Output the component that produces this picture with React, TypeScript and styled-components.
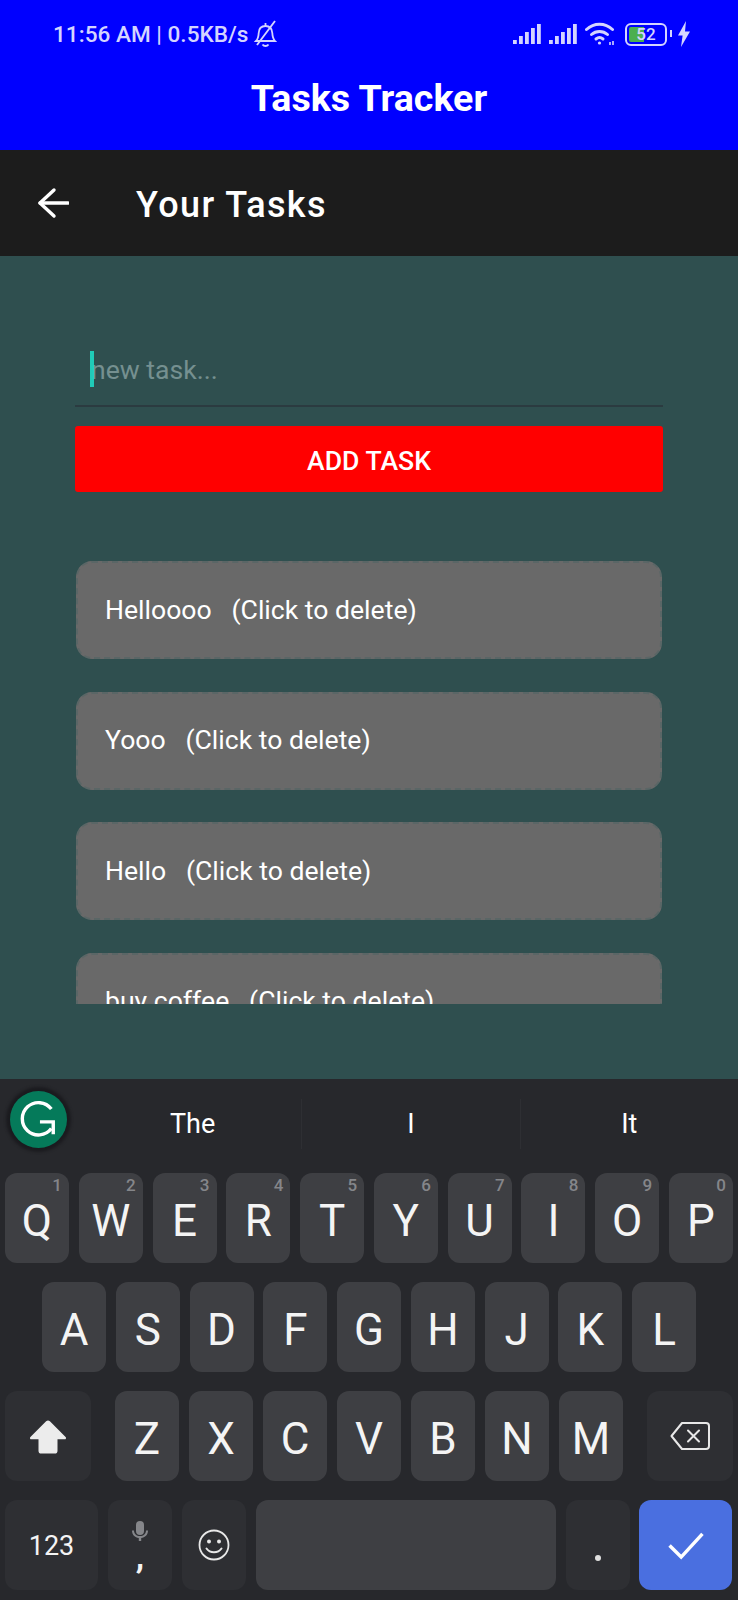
import React from 'react';
import styled, { createGlobalStyle } from 'styled-components';

const GlobalStyle = createGlobalStyle`
    html, body {
        margin: 0;
        padding: 0;
        background: #27282c;
    }
    * {
        box-sizing: border-box;
    }
`;

const Page = styled.div`
    display: flex;
    flex-direction: column;
    width: 738px;
    height: 1600px;
    overflow: hidden;
    font-family: Roboto, 'Liberation Sans', sans-serif;
    color: #fff;
`;

const AppBar = styled.div`
    display: flex;
    flex-direction: column;
    height: 150px;
    background: #0000ff;
`;

const StatusBar = styled.div`
    display: flex;
    align-items: center;
    justify-content: space-between;
    height: 30px;
    margin-top: 19px;
    padding: 0 48px 0 53px;
    color: #d4d4ff;
`;

const StatusText = styled.div`
    display: flex;
    align-items: center;
    gap: 5px;
    font-size: 22.6px;
    font-weight: 500;
`;

const StatusIcons = styled.div`
    display: flex;
    align-items: center;
    gap: 8px;
`;

const Battery = styled.div`
    position: relative;
    display: flex;
    align-items: center;
    justify-content: center;
    width: 42px;
    height: 23px;
    margin-left: 2px;
    margin-right: 3px;
    border: 2.5px solid #d4d4ff;
    border-radius: 6px;
    font-size: 17px;
    font-weight: 500;
    line-height: 1;
    background: linear-gradient(to right, #4caf50 0, #4caf50 46%, transparent 46%);
    background-clip: content-box;
    padding: 2px;

    &::after {
        content: '';
        position: absolute;
        right: -7px;
        top: 5px;
        width: 2px;
        height: 7px;
        background: #d4d4ff;
    }
`;

const AppTitle = styled.div`
    margin-top: 24px;
    text-align: center;
    font-size: 37.6px;
    font-weight: 700;
    line-height: 50px;
`;

const Header = styled.div`
    display: flex;
    align-items: center;
    height: 106px;
    padding-left: 37px;
    background: #1c1c1c;
`;

const HeaderTitle = styled.div`
    margin-left: 67px;
    padding-top: 4px;
    font-size: 36px;
    font-weight: 500;
    letter-spacing: 1.4px;
`;

const Body = styled.div`
    display: flex;
    flex: 1;
    flex-direction: column;
    padding: 84px 75px 0;
    background: #2f4f4f;
`;

const InputWrap = styled.div`
    position: relative;
    height: 67px;
    border-bottom: 2px solid #2b3b40;
`;

const TaskInput = styled.input`
    width: 100%;
    height: 58px;
    padding: 0 0 0 16px;
    border: 0;
    outline: 0;
    background: transparent;
    color: #fff;
    font-family: inherit;
    font-size: 26.6px;

    &::placeholder {
        color: #759090;
        opacity: 1;
    }
`;

const Caret = styled.span`
    position: absolute;
    left: 15px;
    top: 11px;
    width: 4px;
    height: 36px;
    background: #1fd8c3;
    opacity: 0.9;
`;

const AddButton = styled.button`
    width: 100%;
    height: 66px;
    margin-top: 19px;
    padding-top: 4px;
    border: 0;
    border-radius: 3px;
    background: #ff0000;
    color: #fff;
    font-family: inherit;
    font-size: 26.6px;
    font-weight: 500;
`;

const TaskList = styled.div`
    display: flex;
    flex-direction: column;
    gap: 32.6px;
    height: 443px;
    margin: 69px 1px 0;
    overflow: hidden;
`;

const TaskItem = styled.div`
    display: flex;
    flex: none;
    align-items: center;
    height: 98px;
    padding: 0 0 2px 27px;
    border: 2px dashed #5a6666;
    border-radius: 16px;
    background: #696969;
    font-size: 26.6px;
    white-space: pre;
`;

const Keyboard = styled.div`
    display: flex;
    flex: none;
    flex-direction: column;
    height: 521px;
    background: #27282c;
`;

const Suggestions = styled.div`
    display: flex;
    align-items: center;
    height: 94px;
`;

const GrammarlySlot = styled.div`
    display: flex;
    flex: none;
    justify-content: flex-start;
    width: 84px;
    padding: 0 0 14px 10px;
`;

const GrammarlyBadge = styled.div`
    display: flex;
    align-items: center;
    justify-content: center;
    width: 57px;
    height: 57px;
    border-radius: 50%;
    background: #057a5a;
    box-shadow: 0 0 3px 4px #1b1b1f;
`;

const Suggestion = styled.div<{ $divided?: boolean }>`
    display: flex;
    flex: 1;
    align-items: center;
    justify-content: center;
    height: 50px;
    margin-bottom: 4px;
    font-size: 27px;
    border-left: ${p => (p.$divided ? '1px solid #2e2f33' : '0')};
`;

const Rows = styled.div`
    display: flex;
    flex-direction: column;
    gap: 19px;
`;

const KeyRow = styled.div<{ $inset?: number; $gap?: number }>`
    display: flex;
    gap: ${p => p.$gap ?? 9.78}px;
    height: 90px;
    padding: 0 ${p => p.$inset ?? 5}px;
`;

const Key = styled.div<{ $width?: number; $fn?: boolean; $accent?: boolean; $push?: number }>`
    position: relative;
    display: flex;
    flex: none;
    flex-direction: column;
    align-items: center;
    justify-content: center;
    width: ${p => p.$width ?? 64}px;
    margin-left: ${p => p.$push ?? 0}px;
    border-radius: 12px;
    background: ${p => (p.$accent ? '#4a6fe0' : p.$fn ? '#2e2f33' : '#3e3f43')};
    font-size: 44px;
    color: #f4f4f4;
`;

const KeyLetter = styled.span`
    padding-top: 5px;
`;

const KeyHint = styled.span`
    position: absolute;
    top: 4px;
    right: 7px;
    font-size: 17px;
    font-weight: 500;
    line-height: 1;
    color: #85868a;
`;

const SmallLabel = styled.span`
    padding-top: 2px;
    font-size: 27px;
`;

const Comma = styled.span`
    height: 22px;
    margin-top: 5px;
    font-size: 34px;
    font-weight: 700;
    line-height: 16px;
`;

const Dot = styled.span`
    width: 6px;
    height: 6px;
    margin-top: 26px;
    border-radius: 50%;
    background: #e0e0e0;
`;

const Signal = () => (
    <svg width="28" height="20" viewBox="0 0 28 20" fill="#d4d4ff">
        <rect x="0" y="16" width="3.8" height="4" />
        <rect x="6" y="12" width="3.8" height="8" />
        <rect x="12" y="8" width="3.8" height="12" />
        <rect x="18" y="4" width="3.8" height="16" />
        <rect x="24" y="0" width="3.8" height="20" />
    </svg>
);

const Wifi = () => (
    <svg width="30" height="24" viewBox="0 0 30 24" fill="none" stroke="#d4d4ff" strokeWidth="3" strokeLinecap="round">
        <path d="M1.5 7.5C9 .5 20 .5 27.5 7.5" />
        <path d="M6.5 12.5C11 8.5 18 8.5 22.5 12.5" />
        <path d="M11 17c2.2-1.8 4.8-1.8 7 0" />
        <circle cx="14.5" cy="21" r="1.6" fill="#d4d4ff" stroke="none" />
        <path d="M25 20v3M28 19v4" strokeWidth="1.6" strokeLinecap="butt" />
    </svg>
);

const Bolt = () => (
    <svg width="12" height="26" viewBox="0 0 12 26" fill="#d4d4ff">
        <path d="M8 0 0 14.5h4.6L3 26l9-15.5H7z" />
    </svg>
);

const MutedBell = () => (
    <svg width="24" height="28" viewBox="0 0 24 28" fill="none" stroke="#d4d4ff" strokeWidth="1.8">
        <path d="M3 21c2-2 2.5-4 2.7-8 .2-4.500 3-7 6.800-7s6.500 2.500 6.800 7c.2 4 .8 6 2.700 8z" />
        <path d="M12.500 6V3" />
        <path d="M9.500 24.500c1.500 2 4.500 2 6 0" />
        <path d="M22 1 4 25" />
    </svg>
);

const BackArrow = () => (
    <svg width="32" height="32" viewBox="0 0 32 32" fill="none" stroke="#fff" strokeWidth="3.4" strokeLinecap="round" strokeLinejoin="round">
        <path d="M31 16H3" />
        <path d="M17 3 3 16l14 13" />
    </svg>
);

const GrammarlyG = () => (
    <svg width="38" height="38" viewBox="0 0 40 40" fill="none" stroke="#fff" strokeWidth="3.6">
        <path d="M33 9.500A17 17 0 1 0 33 30" />
        <path d="M21 23h14v13" strokeWidth="3.600" />
    </svg>
);

const ShiftIcon = () => (
    <svg width="38" height="35" viewBox="0 0 40 36" fill="#ececec">
        <path d="M18 2a3 3 0 0 1 4 0l16.500 16.500c1 1.200.4 2.500-1 2.500H30v12a3 3 0 0 1-3 3H13a3 3 0 0 1-3-3V21H2.500c-1.400 0-2-1.300-1-2.500z" />
    </svg>
);

const BackspaceIcon = () => (
    <svg width="40" height="30" viewBox="0 0 40 30" fill="none" stroke="#e8e8e8" strokeWidth="2" strokeLinejoin="round">
        <path d="M12 2h24a3 3 0 0 1 3 3v20a3 3 0 0 1-3 3H12L1.500 15z" />
        <path d="M18 9.500 29 20.500M29 9.500 18 20.500" strokeLinecap="round" />
    </svg>
);

const MicIcon = () => (
    <svg width="18" height="22" viewBox="0 0 18 22" fill="#85868a">
        <rect x="5" y="0" width="8" height="14" rx="4" />
        <path d="M1 9.500h2c0 3.500 2.500 5.500 6 5.500s6-2 6-5.500h2c0 4.500-3 7-6.800 7.400V20H7.800v-3.100C4 16.500 1 14 1 9.500z" />
    </svg>
);

const SmileIcon = () => (
    <svg width="32" height="32" viewBox="0 0 32 32" fill="none" stroke="#e8e8e8" strokeWidth="1.800">
        <circle cx="16" cy="16" r="14.500" />
        <circle cx="11" cy="12.500" r="2" fill="#e8e8e8" stroke="none" />
        <circle cx="21" cy="12.500" r="2" fill="#e8e8e8" stroke="none" />
        <path d="M8.500 19.500c3.500 5 11.500 5 15 0" strokeLinecap="round" strokeWidth="2" />
    </svg>
);

const CheckIcon = () => (
    <svg width="38" height="29" viewBox="0 0 38 30" fill="none" stroke="#fff" strokeWidth="3.6">
        <path d="M2 15l12 12L36 3" />
    </svg>
);

const TASKS = ['Helloooo', 'Yooo', 'Hello', 'buy coffee'];
const TOP_ROW = ['Q', 'W', 'E', 'R', 'T', 'Y', 'U', 'I', 'O', 'P'];
const MIDDLE_ROW = ['A', 'S', 'D', 'F', 'G', 'H', 'J', 'K', 'L'];
const BOTTOM_ROW = ['Z', 'X', 'C', 'V', 'B', 'N', 'M'];

const App = () => (
    <Page>
        <GlobalStyle />
        <AppBar>
            <StatusBar>
                <StatusText>
                    11:56 AM | 0.5KB/s
                    <MutedBell />
                </StatusText>
                <StatusIcons>
                    <Signal />
                    <Signal />
                    <Wifi />
                    <Battery>52</Battery>
                    <Bolt />
                </StatusIcons>
            </StatusBar>
            <AppTitle>Tasks Tracker</AppTitle>
        </AppBar>
        <Header>
            <BackArrow />
            <HeaderTitle>Your Tasks</HeaderTitle>
        </Header>
        <Body>
            <InputWrap>
                <TaskInput placeholder="new task..." />
                <Caret />
            </InputWrap>
            <AddButton>ADD TASK</AddButton>
            <TaskList>
                {TASKS.map(task => (
                    <TaskItem key={task}>{`${task}   (Click to delete)`}</TaskItem>
                ))}
            </TaskList>
        </Body>
        <Keyboard>
            <Suggestions>
                <GrammarlySlot>
                    <GrammarlyBadge>
                        <GrammarlyG />
                    </GrammarlyBadge>
                </GrammarlySlot>
                <Suggestion>The</Suggestion>
                <Suggestion $divided>I</Suggestion>
                <Suggestion $divided>It</Suggestion>
            </Suggestions>
            <Rows>
                <KeyRow>
                    {TOP_ROW.map((letter, i) => (
                        <Key key={letter}>
                            <KeyHint>{(i + 1) % 10}</KeyHint>
                            <KeyLetter>{letter}</KeyLetter>
                        </Key>
                    ))}
                </KeyRow>
                <KeyRow $inset={42}>
                    {MIDDLE_ROW.map(letter => (
                        <Key key={letter}>
                            <KeyLetter>{letter}</KeyLetter>
                        </Key>
                    ))}
                </KeyRow>
                <KeyRow $gap={10}>
                    <Key $width={86} $fn>
                        <ShiftIcon />
                    </Key>
                    {BOTTOM_ROW.map((letter, i) => (
                        <Key key={letter} $push={i === 0 ? 14 : 0}>
                            <KeyLetter>{letter}</KeyLetter>
                        </Key>
                    ))}
                    <Key $width={86} $fn $push={14}>
                        <BackspaceIcon />
                    </Key>
                </KeyRow>
                <KeyRow $gap={10}>
                    <Key $width={93} $fn>
                        <SmallLabel>123</SmallLabel>
                    </Key>
                    <Key $fn>
                        <MicIcon />
                        <Comma>,</Comma>
                    </Key>
                    <Key $fn>
                        <SmileIcon />
                    </Key>
                    <Key $width={300} />
                    <Key $fn>
                        <Dot />
                    </Key>
                    <Key $width={93} $accent $push={-1}>
                        <CheckIcon />
                    </Key>
                </KeyRow>
            </Rows>
        </Keyboard>
    </Page>
);

export default App;
